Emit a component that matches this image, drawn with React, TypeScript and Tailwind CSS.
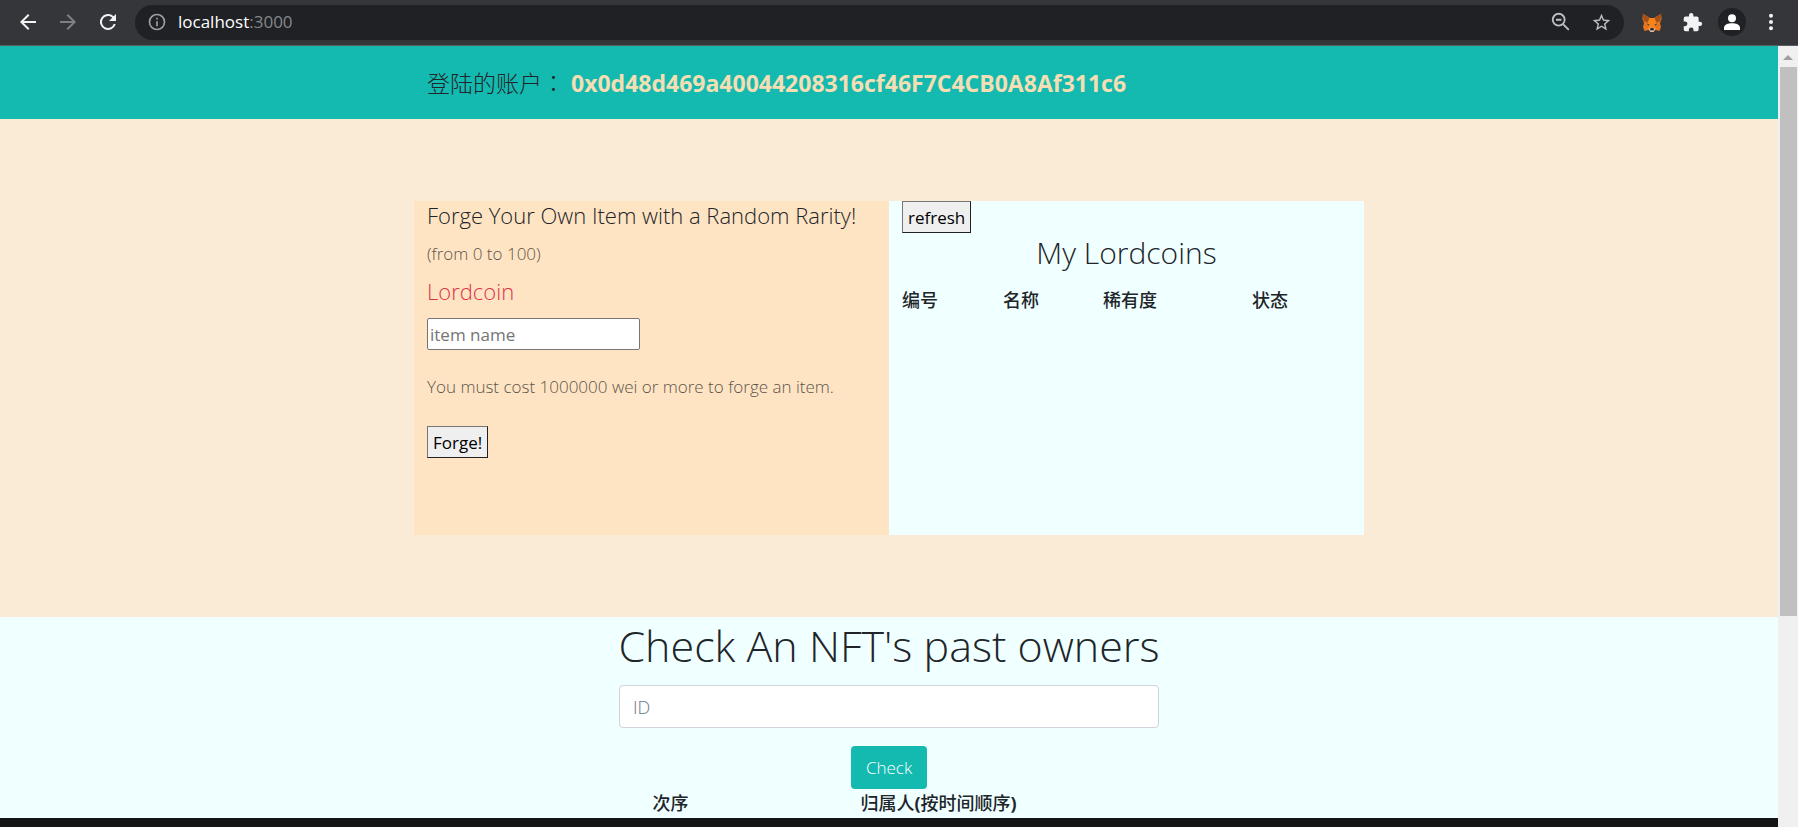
import React from "react";

function ToolbarButton({ label, children, className = "" }: { label: string; children: React.ReactNode; className?: string }) {
  return (
    <button type="button" aria-label={label} className={`flex size-8 items-center justify-center ${className}`}>
      {children}
    </button>
  );
}

function FoxIcon() {
  return (
    <svg viewBox="0 0 20 19" className="h-[19px] w-5">
      <path fill="#e8761f" d="M1 1 8 5h4l7-4 .6 5L18 10l1 4-1.500 4-4-1-2 2h-3l-2-2-4 1L1 14l1-4L.4 6z" />
      <path fill="#a8501a" d="M.8.500 7.600 5 5.500 9.500 1.500 8zM19.200.500 12.400 5l2.100 4.500 4-1.500z" />
      <path fill="#f6851b" d="M7.500 5h5l1.500 5-1.500 6h-5L6 10z" />
      <path fill="#2b3a45" d="m5 10.500 3 1.500-2 .6zM15 10.500 12 12l2 .6z" />
      <path fill="#d7c1b3" d="m6.500 15 2 .6h3l2-.6-2 4h-3z" />
      <path fill="#161616" d="M8.400 15.200h3.200l.3 2H8.100z" />
    </svg>
  );
}

function BrowserBar() {
  return (
    <header className="flex h-[46px] shrink-0 items-center border-b border-[#5b5c5f] bg-[#35363a] pr-[11px] pb-px pl-3">
      <ToolbarButton label="Back" className="mr-2 text-[#f1f3f4]">
        <svg viewBox="0 0 24 24" className="size-6" fill="currentColor"><path d="M20 11H7.830l5.590-5.590L12 4l-8 8 8 8 1.410-1.410L7.830 13H20z" /></svg>
      </ToolbarButton>
      <ToolbarButton label="Forward" className="mr-2 text-[#7f8083]">
        <svg viewBox="0 0 24 24" className="size-6" fill="currentColor"><path d="m12 4-1.410 1.410L16.170 11H4v2h12.170l-5.580 5.590L12 20l8-8z" /></svg>
      </ToolbarButton>
      <ToolbarButton label="Reload" className="mr-[11px] text-[#f1f3f4]">
        <svg viewBox="0 0 24 24" className="size-6" fill="currentColor"><path d="M17.650 6.350A8 8 0 1 0 19.730 14h-2.080A6 6 0 1 1 12 6c1.660 0 3.140.69 4.220 1.780L13 11h7V4z" /></svg>
      </ToolbarButton>
      <div className="flex h-[35px] flex-1 items-center rounded-full bg-[#202124] pr-[7px] pl-3">
        <svg viewBox="0 0 24 24" className="mr-[11px] size-5 text-[#9aa0a6]" fill="currentColor"><path d="M11 7h2v2h-2zm0 4h2v6h-2zm1-9a10 10 0 1 0 0 20 10 10 0 0 0 0-20zm0 18a8 8 0 1 1 0-16 8 8 0 0 1 0 16z" /></svg>
        <a href="http://localhost:3000" className="flex-1 text-[17px] font-normal text-[#85888c]"><span className="text-white">localhost</span>:3000</a>
        <ToolbarButton label="Zoom" className="mr-2 text-[#bdc1c6]">
          <svg viewBox="0 0 24 24" className="size-[22px]" fill="none" stroke="currentColor" strokeWidth="2"><circle cx="9.500" cy="9.500" r="6.500" /><path d="M6.500 9.500h6M14.500 14.500l6 6" /></svg>
        </ToolbarButton>
        <ToolbarButton label="Bookmark" className="text-[#bdc1c6]">
          <svg viewBox="0 0 24 24" className="size-[21px]" fill="currentColor"><path d="m22 9.240-7.190-.62L12 2 9.190 8.630 2 9.240l5.460 4.730L5.820 21 12 17.270 18.180 21l-1.630-7.030zM12 15.400l-3.760 2.270 1-4.280-3.320-2.880 4.380-.38L12 6.100l1.710 4.040 4.380.38-3.320 2.880 1 4.280z" /></svg>
        </ToolbarButton>
      </div>
      <ToolbarButton label="MetaMask" className="mr-2 ml-3"><FoxIcon /></ToolbarButton>
      <ToolbarButton label="Extensions" className="mr-2 text-[#f1f3f4]">
        <svg viewBox="0 0 24 24" className="size-[21px]" fill="currentColor"><path d="M20.500 11H19V7a2 2 0 0 0-2-2h-4V3.500a2.500 2.500 0 0 0-5 0V5H4a2 2 0 0 0-2 2v3.800h1.500a2.700 2.700 0 0 1 0 5.400H2V20a2 2 0 0 0 2 2h3.800v-1.500a2.700 2.700 0 0 1 5.400 0V22H17a2 2 0 0 0 2-2v-4h1.500a2.500 2.500 0 0 0 0-5z" /></svg>
      </ToolbarButton>
      <ToolbarButton label="Profile" className="mr-[7px] text-white">
        <svg viewBox="0 0 28 28" className="size-7" fill="currentColor"><circle cx="14" cy="14" r="14" fill="#202124" /><circle cx="14" cy="10.200" r="4" /><path d="M6 22v-2c0-3.300 4-4.700 8-4.700s8 1.400 8 4.700v2z" /></svg>
      </ToolbarButton>
      <ToolbarButton label="Menu" className="text-[#f1f3f4]">
        <svg viewBox="0 0 24 24" className="size-6" fill="currentColor"><circle cx="12" cy="5.800" r="2" /><circle cx="12" cy="12" r="2" /><circle cx="12" cy="18.200" r="2" /></svg>
      </ToolbarButton>
    </header>
  );
}

const plainButton = "h-8 border border-t-[#767676] border-r-[#212121] border-b-[#212121] border-l-[#767676] bg-[#efefef] px-[5px] pt-[2px] text-[17px] leading-7 font-normal text-black";

function ForgePanel() {
  return (
    <section className="flex flex-col items-start bg-[#ffe4c4] px-[13px]">
      <h4 className="text-[22px] leading-7 whitespace-nowrap">Forge Your Own Item with a Random Rarity!</h4>
      <p className="mt-[11px] text-[17px] leading-7 text-[#5c544b]">(from 0 to 100)</p>
      <h4 className="mt-[9px] text-[22px] leading-7 text-[#dc3545]">Lordcoin</h4>
      <input aria-label="Item name" placeholder="item name" className="mt-[13px] h-8 w-[213px] rounded-[2px] border border-[#767676] bg-white px-[2px] text-[17px] font-normal placeholder:text-[#757575]" />
      <p className="mt-[23px] text-[17px] leading-7 whitespace-nowrap text-[#5c544b]">You must cost 1000000 wei or more to forge an item.</p>
      <button type="button" className={`mt-[25px] ${plainButton}`}>Forge!</button>
    </section>
  );
}

function CoinsPanel() {
  return (
    <section className="bg-[#f0ffff] px-[13px]">
      <button type="button" className={`block ${plainButton}`}>refresh</button>
      <h2 className="text-center text-[30px] leading-10">My Lordcoins</h2>
      <table className="mt-[13px] w-full table-fixed text-left text-[18px] leading-7">
        <thead>
          <tr>
            <th className="w-[101px] font-medium">编号</th>
            <th className="w-[100px] font-medium">名称</th>
            <th className="w-[149px] font-medium">稀有度</th>
            <th className="font-medium">状态</th>
          </tr>
        </thead>
      </table>
    </section>
  );
}

function OwnersSection() {
  return (
    <section className="flex flex-col items-center bg-[#f0ffff]">
      <div className="flex w-[540px] flex-col items-center">
        <h1 className="h-[68px] text-[43px] leading-[58px] whitespace-nowrap">Check An NFT's past owners</h1>
        <input aria-label="ID" placeholder="ID" className="h-[43px] w-full rounded-[4px] border border-[#ced4da] bg-white px-[13px] text-[18px] placeholder:text-[#6c757d]" />
        <button type="button" className="mt-[18px] h-[43px] rounded-[4px] bg-[#14bab0] px-[15px] pt-px text-[17px] text-white">Check</button>
      </div>
      <table className="w-[540px] table-fixed text-[18px] leading-[29px]">
        <thead>
          <tr>
            <th className="w-[103px] font-medium">次序</th>
            <th className="pr-1 font-medium">归属人<span className="font-bold">(</span>按时间顺序<span className="font-bold">)</span></th>
          </tr>
        </thead>
      </table>
    </section>
  );
}

function Scrollbar() {
  return (
    <div aria-hidden="true" className="flex w-5 shrink-0 flex-col items-center bg-[#f0f0f0]">
      <svg viewBox="0 0 20 21" className="h-[21px] w-5"><path d="M5 14h10l-5-5z" fill="#a0a0a0" /></svg>
      <div className="h-[549px] w-[17px] bg-[#c0c0c0]" />
    </div>
  );
}

export default function App() {
  return (
    <div className="flex h-screen flex-col overflow-hidden font-['Open_Sans','Noto_Sans_CJK_SC',sans-serif] font-light text-[#212529]">
      <BrowserBar />
      <div className="flex min-h-0 flex-1">
        <main className="flex-1 bg-[#141414]">
          <div className="bg-[#14bab0]">
            <div className="mx-auto flex h-[73px] max-w-[950px] items-center px-[13px] text-[23px]">
              <p className="whitespace-pre">登陆的账户<span className="font-['Noto_Sans_CJK_TC',sans-serif]" lang="zh-TW">：</span> <strong className="font-bold text-[#f5deb3]">0x0d48d469a40044208316cf46F7C4CB0A8Af311c6</strong></p>
            </div>
          </div>
          <div className="bg-[#faebd7] py-[82px]">
            <div className="mx-auto grid min-h-[334px] max-w-[950px] grid-cols-2">
              <ForgePanel />
              <CoinsPanel />
            </div>
          </div>
          <OwnersSection />
        </main>
        <Scrollbar />
      </div>
    </div>
  );
}
